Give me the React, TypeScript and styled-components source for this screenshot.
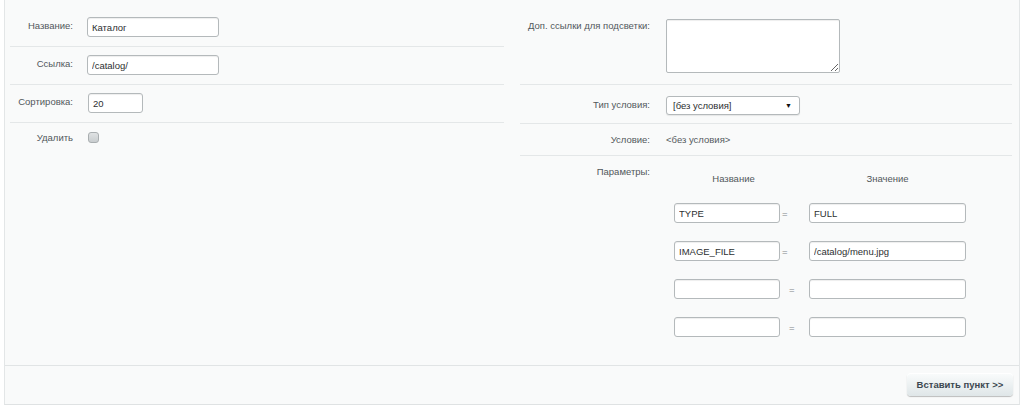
import React from "react";
import styled, { createGlobalStyle } from "styled-components";

const Global = createGlobalStyle`
  html, body { margin: 0; padding: 0; background: #ffffff; }
  body { font-family: "Liberation Sans", Arial, sans-serif; }
`;

const Panel = styled.div`
  margin-left: 4px;
  width: 1014px;
  border-left: 1px solid #e3e6e7;
  border-right: 1px solid #e3e6e7;
  border-bottom: 1px solid #dfe2e3;
  background: #f9fafa;
  font-size: 9.5px;
  color: #4e5457;
`;

const Columns = styled.div`
  display: flex;
  gap: 16px;
  padding: 9px 7px 0 5px;
  height: 366px;
  box-sizing: border-box;
  border-bottom: 1px solid #e1e4e5;
`;

const Column = styled.div<{ $w: number }>`
  width: ${(p) => p.$w}px;
  display: flex;
  flex-direction: column;
`;

const Row = styled.div<{ $pt: number; $pb: number; $last?: boolean }>`
  display: flex;
  padding-top: ${(p) => p.$pt}px;
  padding-bottom: ${(p) => p.$pb}px;
  border-bottom: ${(p) => (p.$last ? "none" : "1px solid #e4e7e8")};
`;

const Label = styled.div<{ $w: number; $pt: number }>`
  width: ${(p) => p.$w}px;
  flex: none;
  box-sizing: border-box;
  text-align: right;
  padding-right: 7px;
  padding-top: ${(p) => p.$pt}px;
  color: #51575a;
  white-space: nowrap;
`;

const Value = styled.div<{ $pl: number }>`
  padding-left: ${(p) => p.$pl}px;
  flex: 1;
`;

const TextInput = styled.input<{ $w: number }>`
  display: block;
  width: ${(p) => p.$w}px;
  height: 20px;
  box-sizing: border-box;
  border: 1px solid #b4b9bb;
  border-radius: 3px;
  box-shadow: inset 0 1px 1px rgba(0, 0, 0, 0.07);
  background: #ffffff;
  padding: 0 4px;
  margin: 0;
  font-family: "Liberation Sans", Arial, sans-serif;
  font-size: 9.5px;
  color: #2c2f31;
  outline: none;
`;

const TextArea = styled.textarea`
  display: block;
  width: 174px;
  height: 54px;
  box-sizing: border-box;
  border: 1px solid #b4b9bb;
  border-radius: 2px;
  box-shadow: inset 0 1px 1px rgba(0, 0, 0, 0.07);
  background: #ffffff;
  margin: 0;
  font-family: "Liberation Sans", Arial, sans-serif;
  font-size: 9.5px;
  outline: none;
`;

const SelectBox = styled.div`
  position: relative;
  width: 134px;
  height: 19px;
  box-sizing: border-box;
  border: 1px solid #b4b9bb;
  border-radius: 3px;
  background: #ffffff;
  box-shadow: 0 1px 1px rgba(0, 0, 0, 0.08);
  padding: 0 0 0 6px;
  display: flex;
  align-items: center;
  color: #2c2f31;
`;

const Arrow = styled.span`
  position: absolute;
  right: 7px;
  top: 5px;
  font-size: 7px;
  line-height: 7px;
  color: #111;
`;

const Checkbox = styled.span`
  display: block;
  width: 11px;
  height: 11px;
  margin-left: 1px;
  box-sizing: border-box;
  border: 1px solid #a9aeb0;
  border-radius: 3px;
  background: linear-gradient(#dfe2e3, #c9cdcf);
`;

const PlainText = styled.div`
  color: #555b5e;
`;

const ParamsGrid = styled.div`
  display: grid;
  grid-template-columns: 119px 157px;
  column-gap: 16px;
  row-gap: 18px;
  padding-left: 8px;
  padding-top: 7px;
`;

const ParamHead = styled.div`
  text-align: center;
  color: #52585b;
  line-height: 11px;
  margin-bottom: 1px;
`;

const NameCell = styled.div<{ $eqGap: number }>`
  display: flex;
  align-items: center;
  height: 20px;
  gap: ${(p) => p.$eqGap}px;
`;

const Eq = styled.span`
  color: #7f8588;
`;

const Footer = styled.div`
  display: flex;
  justify-content: flex-end;
  padding: 7px 6px 0 0;
  height: 38px;
  box-sizing: border-box;
`;

const Button = styled.button`
  height: 23px;
  width: 106px;
  padding: 0;
  border: none;
  border-radius: 4px;
  background: linear-gradient(#fafcfc, #dfe6e8);
  box-shadow: 0 1px 1px rgba(0, 0, 0, 0.25), inset 0 1px 0 #ffffff;
  font-family: "Liberation Sans", Arial, sans-serif;
  font-size: 9.5px;
  font-weight: bold;
  color: #3c4850;
  cursor: pointer;
`;

const params = [
  { name: "TYPE", value: "FULL", gap: 2 },
  { name: "IMAGE_FILE", value: "/catalog/menu.jpg", gap: 2 },
  { name: "", value: "", gap: 9 },
  { name: "", value: "", gap: 9 },
];

export default function App() {
  return (
    <>
      <Global />
      <Panel>
        <Columns>
          <Column $w={494}>
            <Row $pt={8} $pb={9}>
              <Label $w={70} $pt={3}>Название:</Label>
              <Value $pl={7}>
                <TextInput $w={132} defaultValue="Каталог" />
              </Value>
            </Row>
            <Row $pt={8} $pb={9}>
              <Label $w={70} $pt={3}>Ссылка:</Label>
              <Value $pl={7}>
                <TextInput $w={132} defaultValue="/catalog/" />
              </Value>
            </Row>
            <Row $pt={8} $pb={9}>
              <Label $w={70} $pt={3}>Сортировка:</Label>
              <Value $pl={8}>
                <TextInput $w={55} defaultValue="20" />
              </Value>
            </Row>
            <Row $pt={9} $pb={9} $last>
              <Label $w={70} $pt={0}>Удалить</Label>
              <Value $pl={7}>
                <Checkbox />
              </Value>
            </Row>
          </Column>
          <Column $w={492}>
            <Row $pt={10} $pb={11}>
              <Label $w={137} $pt={1}>Доп. ссылки для подсветки:</Label>
              <Value $pl={9}>
                <TextArea />
              </Value>
            </Row>
            <Row $pt={11} $pb={8}>
              <Label $w={137} $pt={3}>Тип условия:</Label>
              <Value $pl={9}>
                <SelectBox>
                  [без условия]
                  <Arrow>▼</Arrow>
                </SelectBox>
              </Value>
            </Row>
            <Row $pt={10} $pb={10}>
              <Label $w={137} $pt={0}>Условие:</Label>
              <Value $pl={9}>
                <PlainText>&lt;без условия&gt;</PlainText>
              </Value>
            </Row>
            <Row $pt={10} $pb={0} $last>
              <Label $w={137} $pt={0}>Параметры:</Label>
              <Value $pl={9}>
                <ParamsGrid>
                  <ParamHead>Название</ParamHead>
                  <ParamHead>Значение</ParamHead>
                  {params.map((p, i) => (
                    <React.Fragment key={i}>
                      <NameCell $eqGap={p.gap}>
                        <TextInput $w={106} defaultValue={p.name} />
                        <Eq>=</Eq>
                      </NameCell>
                      <TextInput $w={157} defaultValue={p.value} />
                    </React.Fragment>
                  ))}
                </ParamsGrid>
              </Value>
            </Row>
          </Column>
        </Columns>
        <Footer>
          <Button>Вставить пункт &gt;&gt;</Button>
        </Footer>
      </Panel>
    </>
  );
}
